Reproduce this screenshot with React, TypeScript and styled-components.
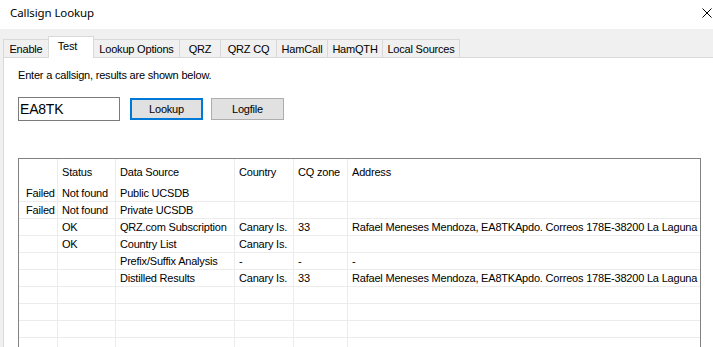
import styled, { createGlobalStyle } from 'styled-components';

const GlobalStyle = createGlobalStyle`
  html, body {
    margin: 0;
    padding: 0;
    background: #f0f0f0;
    overflow: hidden;
  }
  * {
    box-sizing: border-box;
  }
`;

const tabs = [
  { label: 'Enable', width: 46 },
  { label: 'Test', width: 46 },
  { label: 'Lookup Options', width: 87 },
  { label: 'QRZ', width: 42 },
  { label: 'QRZ CQ', width: 57 },
  { label: 'HamCall', width: 52 },
  { label: 'HamQTH', width: 56 },
  { label: 'Local Sources', width: 78 },
];

const columns = ['', 'Status', 'Data Source', 'Country', 'CQ zone', 'Address'];

const address = 'Rafael Meneses Mendoza, EA8TKApdo. Correos 178E-38200 La Laguna';

const rows: string[][] = [
  ['Failed', 'Not found', 'Public UCSDB', '', '', ''],
  ['Failed', 'Not found', 'Private UCSDB', '', '', ''],
  ['', 'OK', 'QRZ.com Subscription', 'Canary Is.', '33', address],
  ['', 'OK', 'Country List', 'Canary Is.', '', ''],
  ['', '', 'Prefix/Suffix Analysis', '-', '-', '-'],
  ['', '', 'Distilled Results', 'Canary Is.', '33', address],
  ['', '', '', '', '', ''],
  ['', '', '', '', '', ''],
  ['', '', '', '', '', ''],
  ['', '', '', '', '', ''],
];

export default function App() {
  return (
    <Window>
      <GlobalStyle />
      <TitleBar>
        <Title>Callsign Lookup</Title>
        <CloseButton>
          <svg width="10" height="10" viewBox="0 0 10 10">
            <path d="M0.5 0.5 L9.5 9.5 M9.5 0.5 L0.5 9.5" stroke="#000" strokeWidth="1" />
          </svg>
        </CloseButton>
      </TitleBar>
      <Body>
        <TabStrip>
          {tabs.map((t, i) => (
            <Tab key={t.label} $width={t.width} $active={t.label === 'Test'} $first={i === 0}>
              {t.label}
            </Tab>
          ))}
        </TabStrip>
        <TabPage>
          <Hint>Enter a callsign, results are shown below.</Hint>
          <InputRow>
            <CallInput defaultValue="EA8TK" />
            <PushButton $focused>Lookup</PushButton>
            <PushButton>Logfile</PushButton>
          </InputRow>
          <Grid>
            <HeaderRow>
              {columns.map((c, i) => (
                <HeaderCell key={i} $first={i === 0}>{c}</HeaderCell>
              ))}
            </HeaderRow>
            {rows.map((r, ri) => (
              <DataRow key={ri}>
                {r.map((v, ci) => (
                  <Cell key={ci} $first={ci === 0}>{v}</Cell>
                ))}
              </DataRow>
            ))}
          </Grid>
        </TabPage>
      </Body>
    </Window>
  );
}

const Window = styled.div`
  width: 713px;
  height: 347px;
  display: flex;
  flex-direction: column;
  overflow: hidden;
  font-family: 'Liberation Sans', Arial, sans-serif;
  font-size: 11px;
  letter-spacing: -0.2px;
  color: #000;
`;

const TitleBar = styled.div`
  height: 29px;
  background: #fff;
  display: flex;
  align-items: flex-start;
  justify-content: space-between;
  padding: 0 1px 0 10px;
  flex-shrink: 0;
`;

const Title = styled.div`
  font-family: 'Noto Sans', 'Open Sans', sans-serif;
  font-size: 11.5px;
  letter-spacing: -0.1px;
  line-height: 16px;
  margin-top: 5px;
`;

const CloseButton = styled.div`
  width: 10px;
  height: 10px;
  margin-top: 8px;
  display: flex;
`;

const Body = styled.div`
  flex: 1;
  background: #f0f0f0;
  padding: 7px 0 0 3px;
  display: flex;
  flex-direction: column;
  min-height: 0;
`;

const TabStrip = styled.div`
  height: 21px;
  display: flex;
  align-items: flex-end;
  flex-shrink: 0;
`;

const Tab = styled.div<{ $width: number; $active?: boolean; $first?: boolean }>`
  width: ${(p) => p.$width}px;
  height: ${(p) => (p.$active ? 22 : 18)}px;
  margin-left: ${(p) => (p.$first ? 0 : -1)}px;
  margin-bottom: ${(p) => (p.$active ? -1 : 0)}px;
  padding-bottom: ${(p) => (p.$active ? 3 : 0)}px;
  padding-right: ${(p) => (p.$active ? 7 : 0)}px;
  position: relative;
  z-index: ${(p) => (p.$active ? 2 : 1)};
  background: ${(p) => (p.$active ? '#fff' : '#f0f0f0')};
  border: 1px solid #d9d9d9;
  border-bottom: none;
  display: flex;
  align-items: center;
  justify-content: center;
  white-space: nowrap;
`;

const TabPage = styled.div`
  flex: 1;
  background: #fff;
  border-top: 1px solid #d9d9d9;
  border-left: 1px solid #d9d9d9;
  padding: 11px 0 0 14px;
  display: flex;
  flex-direction: column;
  align-items: flex-start;
  min-height: 0;
`;

const Hint = styled.div`
  line-height: 13px;
`;

const InputRow = styled.div`
  margin-top: 15px;
  display: flex;
  align-items: center;
  gap: 8px;
`;

const CallInput = styled.input`
  width: 102px;
  height: 24px;
  border: 1px solid #7a7a7a;
  padding: 0 0 0 1px;
  margin: 0 2px 0 0;
  font-family: 'Liberation Sans', Arial, sans-serif;
  font-size: 14px;
  letter-spacing: -0.2px;
  color: #000;
  background: #fff;
  outline: none;
`;

const PushButton = styled.div<{ $focused?: boolean }>`
  width: 73px;
  height: 22px;
  background: #e1e1e1;
  border: ${(p) => (p.$focused ? '2px solid #0078d7' : '1px solid #adadad')};
  display: flex;
  align-items: center;
  justify-content: center;
  font-size: 11px;
`;

const Grid = styled.div`
  margin-top: 37px;
  width: 683px;
  border: 1px solid #828282;
  background: #fff;
  flex-shrink: 0;
`;

const cols = '39px 58px 119px 59px 54px 1fr';

const HeaderRow = styled.div`
  display: grid;
  grid-template-columns: ${cols};
  height: 26px;
`;

const HeaderCell = styled.div<{ $first?: boolean }>`
  border-right: 1px solid #ececec;
  padding-left: ${(p) => (p.$first ? 7 : 4)}px;
  display: flex;
  align-items: center;
  white-space: nowrap;
  &:last-child {
    border-right: none;
  }
`;

const DataRow = styled.div`
  display: grid;
  grid-template-columns: ${cols};
  height: 17px;
  border-bottom: 1px solid #ececec;
`;

const Cell = styled.div<{ $first?: boolean }>`
  border-right: 1px solid #ececec;
  padding-left: ${(p) => (p.$first ? 7 : 4)}px;
  display: flex;
  align-items: center;
  white-space: nowrap;
  overflow: hidden;
  letter-spacing: -0.2px;
  &:last-child {
    border-right: none;
  }
`;
